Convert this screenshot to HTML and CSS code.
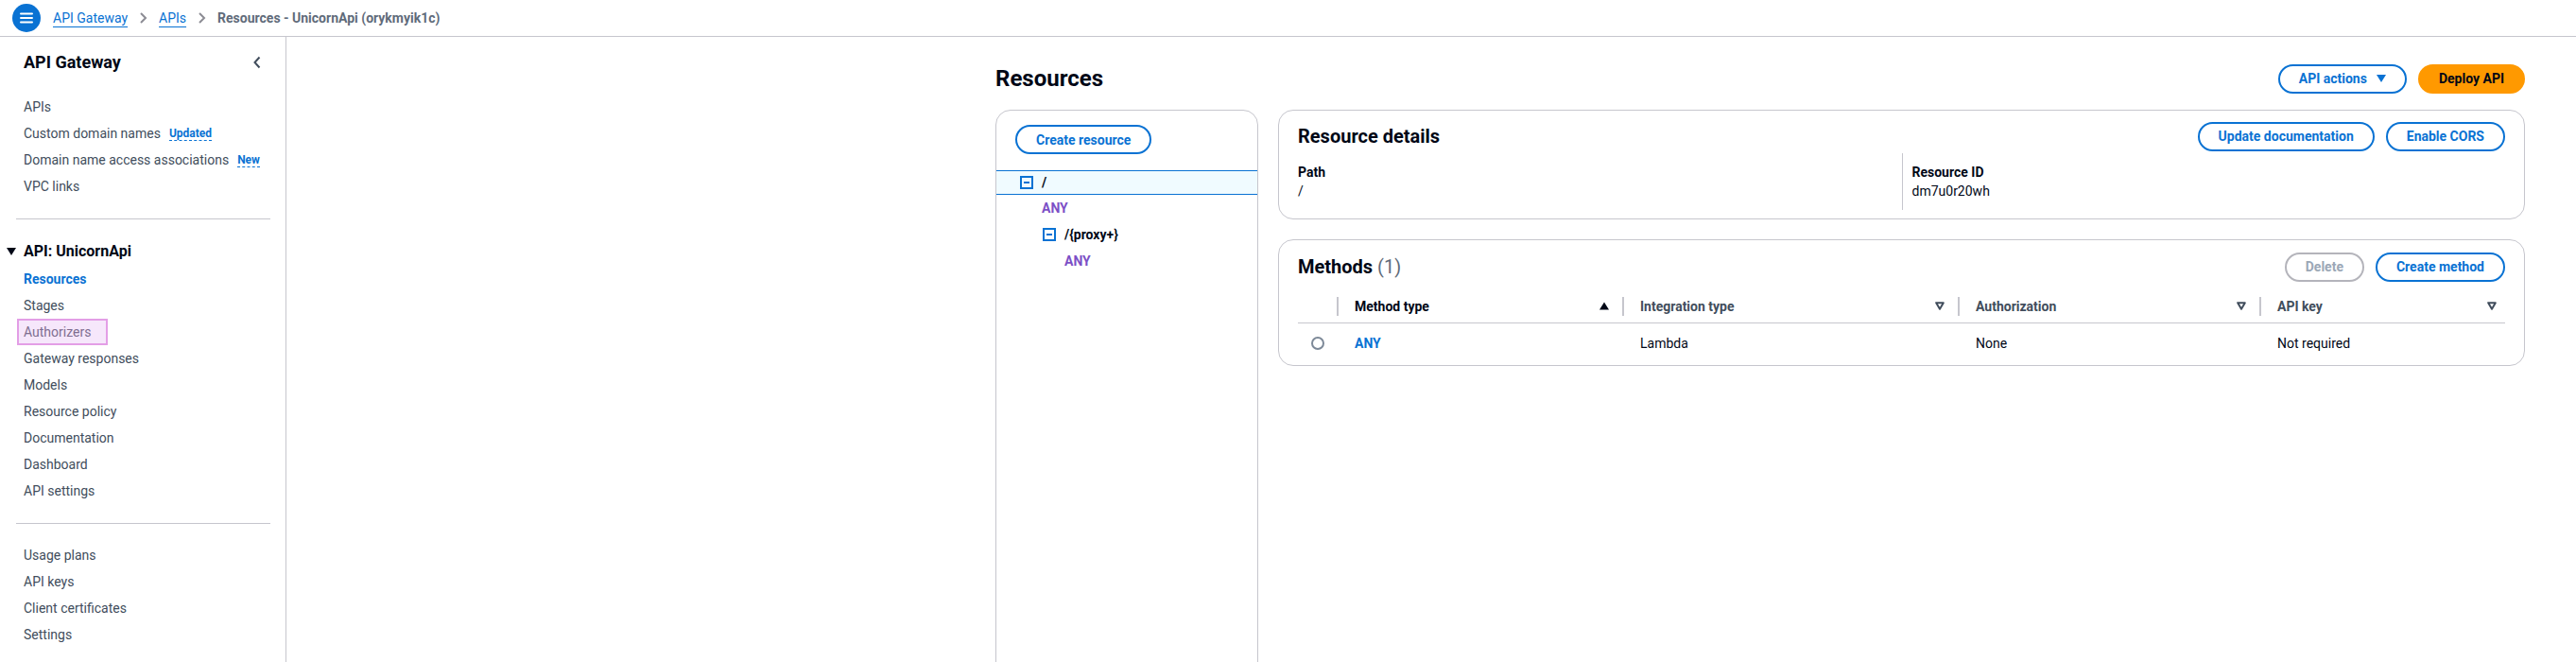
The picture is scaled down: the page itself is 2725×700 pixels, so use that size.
FILE: index.html
```html
<!DOCTYPE html>
<html lang="en">
<head>
<meta charset="utf-8">
<title>Resources - UnicornApi</title>
<link rel="stylesheet" href="styles.css">
</head>
<body>
<header class="topbar">
  <div class="menu-btn">
    <svg width="14" height="12" viewBox="0 0 14 12"><path d="M1 1.5h12M1 6h12M1 10.5h12" stroke="#fff" stroke-width="2" stroke-linecap="round"/></svg>
  </div>
  <nav class="crumbs">
    <a class="crumb-link" href="#">API Gateway</a>
    <svg class="crumb-sep" width="9" height="14" viewBox="0 0 9 14"><path d="M2 2l5 5-5 5" fill="none" stroke="#8c8c94" stroke-width="2"/></svg>
    <a class="crumb-link" href="#">APIs</a>
    <svg class="crumb-sep" width="9" height="14" viewBox="0 0 9 14"><path d="M2 2l5 5-5 5" fill="none" stroke="#8c8c94" stroke-width="2"/></svg>
    <span class="crumb-current">Resources - UnicornApi (orykmyik1c)</span>
  </nav>
</header>

<div class="layout">
  <aside class="sidebar">
    <div class="side-head">
      <span class="side-title">API Gateway</span>
      <svg width="10" height="14" viewBox="0 0 10 14"><path d="M7.5 1.5L2.5 7l5 5.5" fill="none" stroke="#414d5c" stroke-width="2"/></svg>
    </div>
    <ul class="nav-list first">
      <li><a href="#">APIs</a></li>
      <li><a href="#">Custom domain names</a><span class="badge">Updated</span></li>
      <li><a href="#">Domain name access associations</a><span class="badge">New</span></li>
      <li><a href="#">VPC links</a></li>
    </ul>
    <hr class="nav-divider">
    <div class="section-head">
      <svg width="10" height="8" viewBox="0 0 10 8"><path d="M0 0h10L5 8z" fill="#000716"/></svg>
      <span>API: UnicornApi</span>
    </div>
    <ul class="nav-list section">
      <li><a class="active" href="#">Resources</a></li>
      <li><a href="#">Stages</a></li>
      <li><a class="hovered" href="#">Authorizers</a></li>
      <li><a href="#">Gateway responses</a></li>
      <li><a href="#">Models</a></li>
      <li><a href="#">Resource policy</a></li>
      <li><a href="#">Documentation</a></li>
      <li><a href="#">Dashboard</a></li>
      <li><a href="#">API settings</a></li>
    </ul>
    <hr class="nav-divider second">
    <ul class="nav-list last">
      <li><a href="#">Usage plans</a></li>
      <li><a href="#">API keys</a></li>
      <li><a href="#">Client certificates</a></li>
      <li><a href="#">Settings</a></li>
    </ul>
  </aside>

  <main class="main">
    <div class="content">
      <div class="page-head">
        <h1 class="page-title">Resources</h1>
        <div class="btn-row">
          <button class="btn">API actions
            <svg width="10" height="8" viewBox="0 0 10 8"><path d="M0 0h10L5 8z" fill="#0972d3"/></svg>
          </button>
          <button class="btn primary">Deploy API</button>
        </div>
      </div>

      <div class="columns">
        <section class="panel tree-panel">
          <button class="btn create-res">Create resource</button>
          <ul class="tree">
            <li class="node selected lvl0">
              <span class="toggle"></span><span class="path">/</span>
            </li>
            <li class="node method lvl0m">ANY</li>
            <li class="node lvl1">
              <span class="toggle"></span><span class="path">/{proxy+}</span>
            </li>
            <li class="node method lvl1m">ANY</li>
          </ul>
        </section>

        <div class="right-col">
          <section class="panel">
            <div class="panel-head">
              <h2 class="panel-title">Resource details</h2>
              <div class="btn-row">
                <button class="btn">Update documentation</button>
                <button class="btn">Enable CORS</button>
              </div>
            </div>
            <div class="details">
              <div class="detail-col">
                <div class="label">Path</div>
                <div class="value">/</div>
              </div>
              <div class="detail-col divided">
                <div class="label">Resource ID</div>
                <div class="value">dm7u0r20wh</div>
              </div>
            </div>
          </section>

          <section class="panel methods">
            <div class="panel-head">
              <h2 class="panel-title">Methods <span class="count">(1)</span></h2>
              <div class="btn-row">
                <button class="btn disabled">Delete</button>
                <button class="btn">Create method</button>
              </div>
            </div>
            <div class="table">
              <div class="thead">
                <div class="th-sel"></div>
                <div class="th sorted"><span>Method type</span>
                  <svg width="10" height="9" viewBox="0 0 10 9"><path d="M5 0.5L10 8.5H0z" fill="#000716"/></svg>
                </div>
                <div class="th"><span>Integration type</span>
                  <svg width="10" height="9" viewBox="0 0 10 9"><path d="M1.2 1.2h7.6L5 7.8z" fill="none" stroke="#414d5c" stroke-width="2" stroke-linejoin="round"/></svg>
                </div>
                <div class="th"><span>Authorization</span>
                  <svg width="10" height="9" viewBox="0 0 10 9"><path d="M1.2 1.2h7.6L5 7.8z" fill="none" stroke="#414d5c" stroke-width="2" stroke-linejoin="round"/></svg>
                </div>
                <div class="th last"><span>API key</span>
                  <svg width="10" height="9" viewBox="0 0 10 9"><path d="M1.2 1.2h7.6L5 7.8z" fill="none" stroke="#414d5c" stroke-width="2" stroke-linejoin="round"/></svg>
                </div>
              </div>
              <div class="tr">
                <div class="td-sel"><span class="radio"></span></div>
                <div class="td"><a class="method-link" href="#">ANY</a></div>
                <div class="td">Lambda</div>
                <div class="td">None</div>
                <div class="td">Not required</div>
              </div>
            </div>
          </section>
        </div>
      </div>
    </div>
  </main>
</div>
</body>
</html>
```
FILE: styles.css
```css
* { box-sizing: border-box; }

html, body { height: 100%; }

body {
  margin: 0;
  font-family: Roboto, "Open Sans", Arial, sans-serif;
  font-size: 14px;
  line-height: 20px;
  color: #000716;
  background: #ffffff;
  overflow: hidden;
}

a { text-decoration: none; color: inherit; }

ul { list-style: none; margin: 0; padding: 0; }

h1, h2 { margin: 0; }

/* ---------- top bar ---------- */
.topbar {
  height: 39px;
  border-bottom: 1px solid #c6c6cd;
  display: flex;
  align-items: center;
  padding-left: 13px;
  gap: 13px;
}

.menu-btn {
  width: 30px;
  height: 30px;
  border-radius: 50%;
  background: #0972d3;
  display: flex;
  align-items: center;
  justify-content: center;
}

.crumbs {
  display: flex;
  align-items: center;
  gap: 12px;
}

.crumb-link {
  color: #0972d3;
  text-decoration: underline;
  text-underline-offset: 4px;
  text-decoration-thickness: 1px;
}

.crumb-sep { display: block; }

.crumb-current {
  color: #5f6b7a;
  font-weight: 700;
}

/* ---------- layout ---------- */
.layout {
  display: flex;
  height: calc(100% - 39px);
}

.sidebar {
  width: 303px;
  flex: none;
  border-right: 1px solid #c6c6cd;
  padding-top: 16px;
}

.side-head {
  display: flex;
  justify-content: space-between;
  align-items: center;
  padding: 0 25px 0 25px;
  height: 22px;
}

.side-title {
  font-size: 18px;
  line-height: 22px;
  font-weight: 700;
  color: #000716;
}

.nav-list li {
  height: 28px;
  display: flex;
  align-items: center;
  padding-left: 25px;
}

.nav-list a { color: #414d5c; }

.nav-list.first { margin-top: 22px; }
.nav-list.section { margin-top: 4px; }
.nav-list.last { margin-top: 19px; }

.badge {
  margin-left: 9px;
  color: #0972d3;
  font-size: 12px;
  font-weight: 700;
  line-height: 14px;
  border-bottom: 1px dashed #0972d3;
}

.nav-divider {
  border: 0;
  border-top: 1px solid #c6c6cd;
  margin: 20px 16px 0 17px;
}

.nav-divider.second { margin-top: 20px; }

.section-head {
  margin-top: 23px;
  height: 22px;
  display: flex;
  align-items: center;
  gap: 8px;
  padding-left: 7px;
  font-size: 16px;
  font-weight: 700;
  color: #000716;
}

.nav-list a.active {
  color: #0972d3;
  font-weight: 700;
}

.nav-list a.hovered {
  margin-left: -7px;
  padding: 2px 16px 2px 5px;
  border: 2px solid #e39ee6;
  background: #f6e7fb;
  color: #7f6e90;
}

/* ---------- main ---------- */
.main {
  flex: 1;
  display: flex;
  justify-content: flex-end;
  padding: 29px 54px 0 0;
  min-width: 0;
}

.content { width: 1618px; }

.page-head {
  display: flex;
  justify-content: space-between;
  align-items: center;
  height: 30px;
  margin-bottom: 18px;
}

.page-title {
  font-size: 24px;
  line-height: 30px;
  font-weight: 700;
  color: #000716;
}

.btn-row {
  display: flex;
  gap: 12px;
  align-items: center;
}

.btn {
  height: 31px;
  border: 2px solid #0972d3;
  border-radius: 20px;
  background: #fff;
  color: #0972d3;
  font-family: inherit;
  font-size: 14px;
  font-weight: 700;
  line-height: 20px;
  padding: 0 20px;
  display: inline-flex;
  align-items: center;
  gap: 10px;
  cursor: pointer;
}

.btn.primary {
  background: #ff9900;
  border-color: #ff9900;
  color: #000716;
}

.btn.disabled {
  border-color: #b4b4bb;
  color: #9ba7b6;
}

.columns {
  display: grid;
  grid-template-columns: 278px 1fr;
  column-gap: 21px;
  align-items: start;
}

.panel {
  border: 1px solid #c6c6cd;
  border-radius: 16px;
  background: #fff;
}

/* tree */
.tree-panel {
  height: 640px;
  padding-top: 15px;
}

.create-res { margin-left: 20px; }

.tree { margin-top: 17px; }

.node {
  height: 28px;
  display: flex;
  align-items: center;
  font-weight: 700;
}

.node.selected {
  height: 26px;
  background: #f0fbff;
  border-top: 1px solid #0972d3;
  border-bottom: 1px solid #0972d3;
}

.lvl0 { padding-left: 25px; }
.lvl0m { padding-left: 48px; }
.lvl1 { padding-left: 49px; }
.lvl1m { padding-left: 72px; }

.toggle {
  width: 14px;
  height: 14px;
  border: 2px solid #0972d3;
  margin-right: 9px;
  display: flex;
  align-items: center;
  justify-content: center;
}

.toggle::before {
  content: "";
  width: 6px;
  height: 2px;
  background: #0972d3;
}

.path { color: #000716; }

.method { color: #7c4fc6; }

/* right column */
.right-col {
  display: flex;
  flex-direction: column;
  gap: 21px;
}

.panel-head {
  display: flex;
  justify-content: space-between;
  align-items: center;
  padding: 11px 20px 0;
  height: 43px;
}

.panel-title {
  font-size: 20px;
  line-height: 24px;
  font-weight: 700;
  color: #000716;
}

.count {
  font-weight: 400;
  color: #5f6b7a;
}

.details {
  display: grid;
  grid-template-columns: 1fr 1fr;
  padding: 2px 20px 9px;
}

.detail-col { padding: 10px 0; }

.detail-col.divided {
  border-left: 1px solid #c6c6cd;
  padding-left: 10px;
}

.label { font-weight: 700; }

/* methods table */
.methods .panel-head { padding-top: 12px; height: 44px; }

.table {
  margin: 8px 20px 0;
  padding-bottom: 2px;
}

.thead, .tr {
  display: grid;
  grid-template-columns: 41px 302px 355px 319px 1fr;
  align-items: center;
}

.thead {
  height: 36px;
  border-bottom: 1px solid #c6c6cd;
}

.th {
  height: 20px;
  border-left: 2px solid #c6c6cd;
  padding: 0 14px 0 17px;
  display: flex;
  justify-content: space-between;
  align-items: center;
  font-weight: 700;
  color: #414d5c;
}

.th.sorted { color: #000716; }

.th.last { padding-right: 9px; }

.tr { height: 42px; }

.td-sel {
  display: flex;
  justify-content: center;
}

.radio {
  width: 14px;
  height: 14px;
  border: 2px solid #7d8998;
  border-radius: 50%;
}

.td { padding-left: 19px; }

.method-link {
  color: #0972d3;
  font-weight: 700;
}
```
